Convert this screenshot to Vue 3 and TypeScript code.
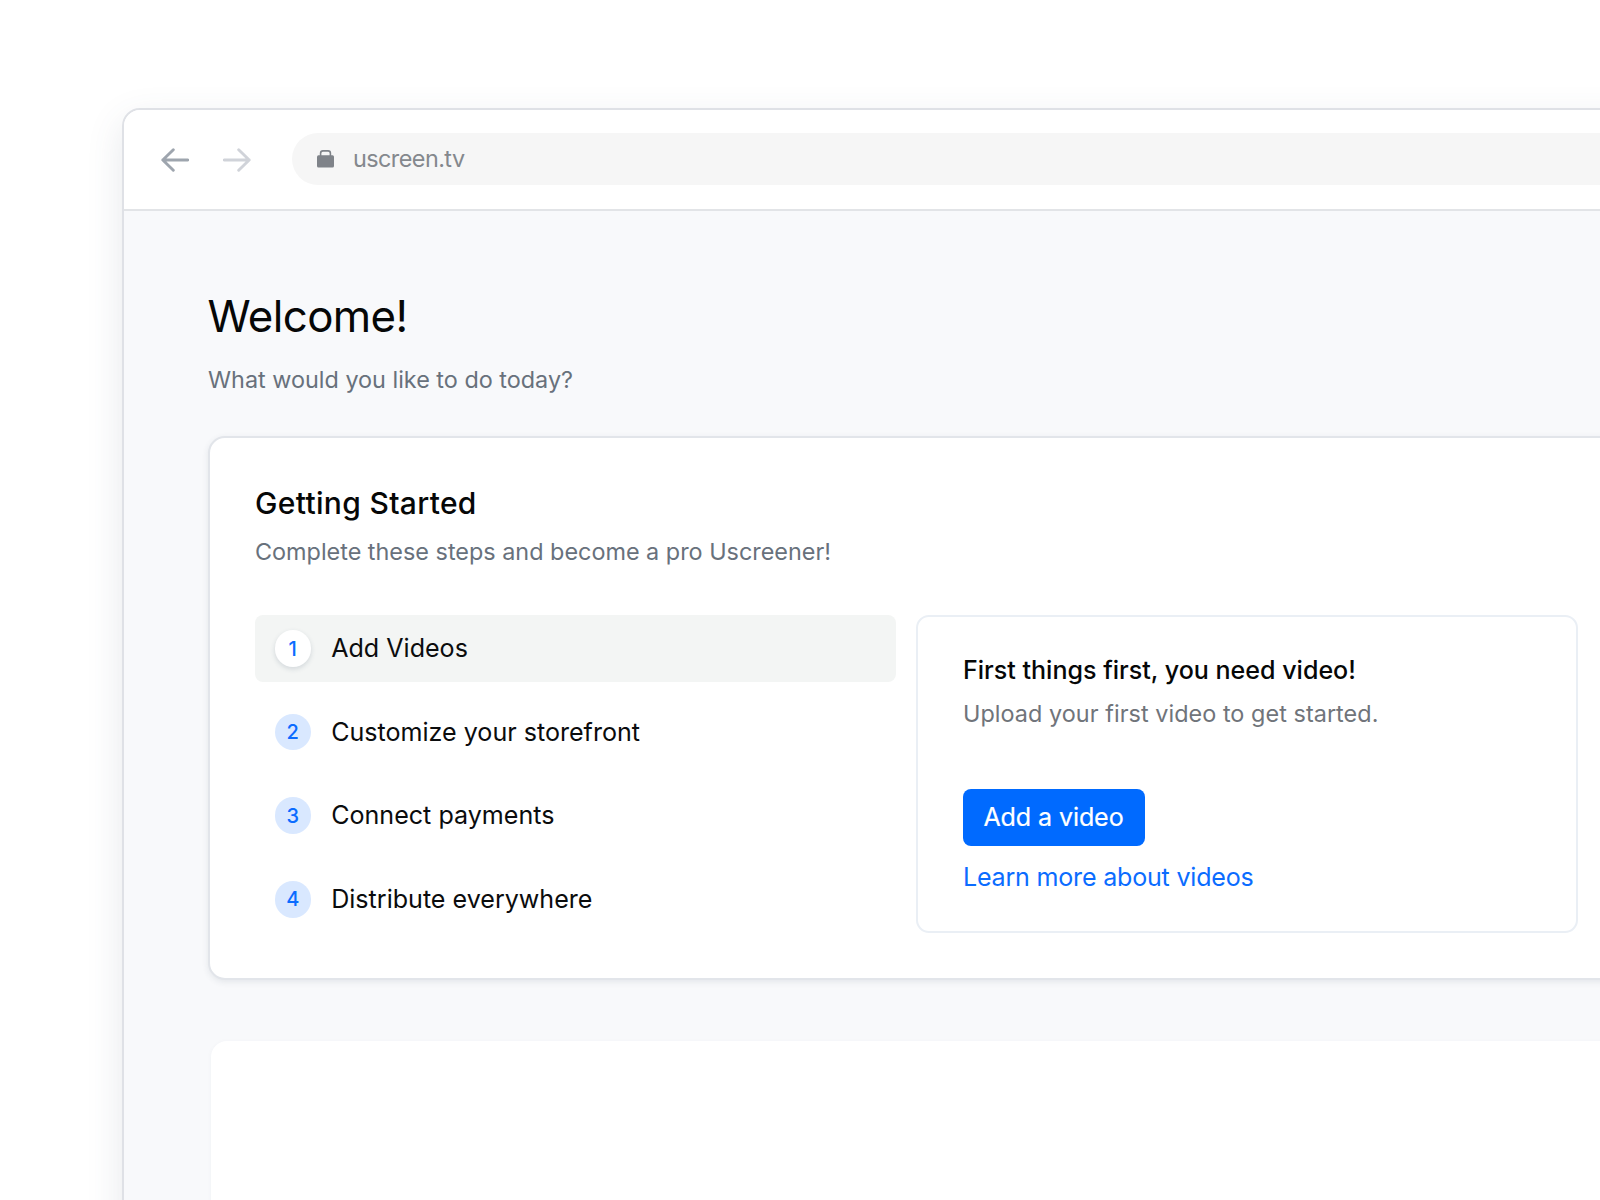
<script setup lang="ts">
interface Step {
  id: number
  label: string
}

const steps: Step[] = [
  { id: 1, label: 'Add Videos' },
  { id: 2, label: 'Customize your storefront' },
  { id: 3, label: 'Connect payments' },
  { id: 4, label: 'Distribute everywhere' },
]
const activeStep = 1
</script>

<template>
  <div class="stage">
    <div class="browser">
      <header class="toolbar">
        <svg class="arrow back" viewBox="0 0 28 24" fill="none">
          <path d="M12.3 1.7 1.8 12l10.5 10.3M1.8 12h24.9" />
        </svg>
        <svg class="arrow forward" viewBox="0 0 28 24" fill="none">
          <path d="M15.7 1.7 26.2 12 15.7 22.3M26.2 12H1.3" />
        </svg>
        <div class="address">
          <svg class="lock" viewBox="0 0 17 18">
            <path d="M3.6 6V3.2A2.3 2.3 0 0 1 5.9.9h5.2a2.3 2.3 0 0 1 2.3 2.3V6" fill="none" stroke="#7f8389" stroke-width="1.6" />
            <rect x="0" y="5.2" width="17" height="12.4" rx="1.5" fill="#7f8389" />
          </svg>
          <span>uscreen.tv</span>
        </div>
      </header>

      <main class="content">
        <h1>Welcome!</h1>
        <p class="sub intro">What would you like to do today?</p>

        <section class="card">
          <h2>Getting Started</h2>
          <p class="sub lead">Complete these steps and become a pro Uscreener!</p>
          <div class="columns">
            <ol class="steps">
              <li v-for="step in steps" :key="step.id" :class="{ active: step.id === activeStep }">
                <span class="badge">{{ step.id }}</span>
                <span class="label">{{ step.label }}</span>
              </li>
            </ol>
            <article class="detail">
              <h3>First things first, you need video!</h3>
              <p class="sub hint">Upload your first video to get started.</p>
              <button type="button">Add a video</button>
              <a class="more">Learn more about videos</a>
            </article>
          </div>
        </section>

        <section class="card-blank"></section>
      </main>
    </div>
  </div>
</template>

<style>
body {
  margin: 0;
  background: #fff;
}
</style>

<style scoped>
.stage {
  box-sizing: border-box;
  width: 1600px;
  height: 1200px;
  padding: 108px 0 0 122px;
  overflow: hidden;
  background: #fff;
  font-family: Inter, 'Liberation Sans', sans-serif;
  color: #0b0c0d;
}

h1,
h2,
h3,
p,
ol {
  margin: 0;
  padding: 0;
  white-space: nowrap;
}

.browser {
  box-sizing: border-box;
  width: 1700px;
  height: 1300px;
  border: 2px solid #dfe1e6;
  border-radius: 18px;
  overflow: hidden;
  background: #f8f9fb;
  box-shadow: 0 12px 36px rgba(70, 85, 110, 0.13);
}

.toolbar {
  display: flex;
  align-items: center;
  box-sizing: border-box;
  height: 101px;
  padding: 0 0 2px 37px;
  border-bottom: 2px solid #e2e4e7;
  background: #fff;
}

.arrow {
  flex: none;
  width: 28px;
  height: 24px;
  margin-top: 2.5px;
  stroke: #9ea5ae;
  stroke-width: 2.9;
  stroke-linecap: round;
  stroke-linejoin: round;
}

.forward {
  margin-left: 34.3px;
  stroke: #d0d3d9;
}

.address {
  display: flex;
  align-items: center;
  box-sizing: border-box;
  flex: 1;
  height: 52px;
  margin-left: 40.7px;
  padding-left: 25px;
  border-radius: 26px 0 0 26px;
  background: #f6f6f6;
  color: #84888d;
  font-size: 23.4px;
  letter-spacing: -0.55px;
}

.lock {
  flex: none;
  width: 17px;
  height: 18px;
  margin-right: 19px;
}

.content {
  padding: 80px 0 0 84px;
}

h1 {
  margin-left: -0.5px;
  font-size: 43.8px;
  font-weight: 400;
  line-height: 52px;
  letter-spacing: -0.6px;
  color: #060707;
}

.sub {
  color: #68717c;
  font-size: 23.4px;
  line-height: 36px;
}

.intro {
  margin-top: 18.5px;
}

.card {
  box-sizing: border-box;
  width: 1500px;
  height: 544px;
  margin-top: 38.5px;
  padding: 45px 0 0 45px;
  border: 2px solid #e2e5ea;
  border-radius: 17px;
  background: #fff;
  box-shadow: 0 2px 6px rgba(50, 65, 90, 0.1);
}

h2 {
  font-size: 30px;
  font-weight: 500;
  line-height: 40px;
  letter-spacing: 0.33px;
  color: #060707;
}

.lead {
  margin-top: 11px;
}

.columns {
  display: flex;
  gap: 20.5px;
  margin-top: 45px;
}

.steps {
  display: flex;
  flex-direction: column;
  gap: 16.6px;
  width: 640.5px;
  list-style: none;
}

.steps li {
  display: flex;
  align-items: center;
  gap: 20.2px;
  height: 67px;
  padding-left: 19.5px;
  border-radius: 8px;
}

.steps .active {
  background: #f3f5f4;
}

.badge {
  display: flex;
  align-items: center;
  justify-content: center;
  width: 36.5px;
  height: 36.5px;
  border-radius: 50%;
  background: #d9e8ff;
  color: #0b6cff;
  font-size: 20px;
  font-weight: 500;
  line-height: 36px;
}

.active .badge {
  background: #fff;
  box-shadow: 0 2px 5px rgba(40, 60, 90, 0.16);
}

.label {
  margin-top: -1px;
  font-size: 25.08px;
}

.detail {
  display: flex;
  flex-direction: column;
  align-items: flex-start;
  box-sizing: border-box;
  width: 661.5px;
  height: 317.5px;
  padding: 33px 0 0 45px;
  border: 2px solid #eaeff5;
  border-radius: 13px;
}

h3 {
  font-size: 25.05px;
  font-weight: 500;
  line-height: 40px;
  color: #060707;
}

.hint {
  margin-top: 6px;
  color: #70747a;
  letter-spacing: 0.05px;
}

button {
  width: 182px;
  height: 57px;
  margin-top: 57px;
  padding: 0 1px 2px 0;
  border: 0;
  border-radius: 8px;
  background: #006aff;
  color: #fff;
  font-family: inherit;
  font-size: 25.05px;
  font-weight: 400;
  letter-spacing: -0.1px;
  -webkit-text-stroke: 0.2px #fff;
}

.more {
  margin-top: 11px;
  color: #0b6cff;
  font-size: 25.05px;
  line-height: 40px;
  letter-spacing: -0.2px;
}

.card-blank {
  width: 1500px;
  height: 400px;
  margin: 61px 0 0 3px;
  border-radius: 16px;
  background: #fff;
  box-shadow: 0 1px 5px rgba(60, 75, 90, 0.04);
}
</style>
